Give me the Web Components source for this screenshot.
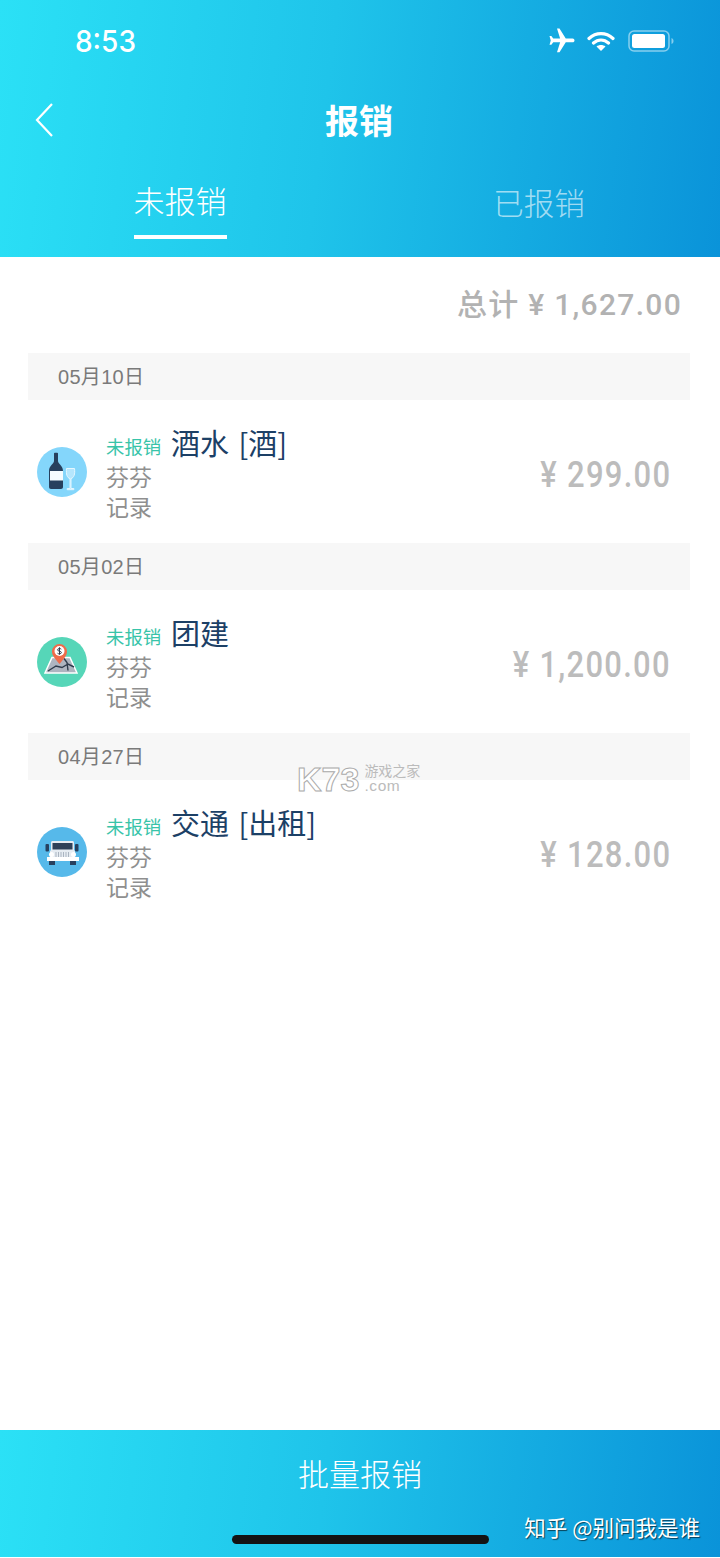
<!DOCTYPE html>
<html lang="zh">
<head>
<meta charset="utf-8">
<title>报销</title>
<style>
  html, body { margin: 0; padding: 0; background: #fff; }
  body { width: 720px; height: 1558px; overflow: hidden; font-family: "Noto Sans CJK SC", sans-serif; }
  .page { position: relative; display: flex; flex-direction: column; height: 1558px; }
  .list { flex: 1; }
</style>
</head>
<body>
<div class="page">
  <app-header title="报销"></app-header>
  <div class="list">
    <total-row>总计 ¥ 1,627.00</total-row>
    <date-band>05月10日</date-band>
    <expense-row name="酒水 [酒]" amount="¥ 299.00" who="芬芬记录">
      <svg slot="icon" viewBox="0 0 50 50" width="50" height="50">
        <circle cx="25" cy="25" r="25" fill="#84d6fb"/>
        <path d="M17 6.500c0-.5.3-.8.8-.8h2.400c.5 0 .8.300.8.800V14c0 3 5 4.500 5 10v16c0 1.200-.8 2-2 2h-10c-1.200 0-2-.8-2-2V24c0-5.500 5-7 5-10z" fill="#27405e"/>
        <rect x="13" y="24" width="13" height="9.500" fill="#f4fbff"/>
        <path d="M29.500 21.500h8c.8 5.500-.6 9.500-3.500 10v10h2.800v1.200h-6.600v-1.200H33v-10c-3-.5-4-4.500-3.500-10z" fill="#b5e6fd" stroke="#e6f7ff" stroke-width="1"/>
      </svg>
    </expense-row>
    <date-band>05月02日</date-band>
    <expense-row name="团建" amount="¥ 1,200.00" who="芬芬记录">
      <svg slot="icon" viewBox="0 0 50 50" width="50" height="50">
        <circle cx="25" cy="25" r="25" fill="#56d6b8"/>
        <path d="M15 20.500h18l7 15.500H8z" fill="#aeb4c0" stroke="#fff" stroke-width="1.500"/>
        <path d="M11 34l8-5 6 1.500 6-3.500 6 3M27 21.500l3 4 1 8" fill="none" stroke="#2f3b4c" stroke-width="1.400"/>
        <path d="M22.500 27c-4-5-7.500-8-7.500-12.500a7.500 7.500 0 0 1 15 0c0 4.500-3.500 7.500-7.500 12.500z" fill="#ef6b4a"/>
        <circle cx="22.500" cy="14" r="5" fill="#fff"/>
        <path d="M24.300 12.200c-.8-1-3.700-1-3.700.7s3.800 1 3.800 2.600-3.100 1.700-3.900.7M22.500 10.300v7.400" fill="none" stroke="#2f3b4c" stroke-width="1"/>
      </svg>
    </expense-row>
    <date-band>04月27日</date-band>
    <expense-row name="交通 [出租]" amount="¥ 128.00" who="芬芬记录">
      <svg slot="icon" viewBox="0 0 50 50" width="50" height="50">
        <circle cx="25" cy="25" r="25" fill="#56b9ea"/>
        <rect x="8.500" y="17" width="3.500" height="7.500" rx="1" fill="#27405e"/>
        <rect x="38" y="17" width="3.500" height="7.500" rx="1" fill="#27405e"/>
        <path d="M14 15.500c0-1 .8-1.500 1.500-1.500h20c.7 0 1.500.5 1.500 1.500V23l1 1v7H13v-7l1-1z" fill="#e6ecf2"/>
        <rect x="15.500" y="16" width="20" height="6.500" fill="#2f4159"/>
        <circle cx="14.500" cy="27.500" r="2.500" fill="#fff"/>
        <circle cx="36.500" cy="27.500" r="2.500" fill="#fff"/>
        <path d="M19 25v5M21.500 25v5M24 25v5M26.500 25v5M29 25v5M31.500 25v5" stroke="#aab4c0" stroke-width="1"/>
        <rect x="10" y="30" width="32" height="4" fill="#fff"/>
        <rect x="12" y="34" width="6" height="4" fill="#27405e"/>
        <rect x="33" y="34" width="6" height="4" fill="#27405e"/>
      </svg>
    </expense-row>
  </div>
  <bottom-action>批量报销</bottom-action>
  <site-mark></site-mark>
  <home-bar></home-bar>
  <credit-mark>知乎 @别问我是谁</credit-mark>
</div>

<script>
// Shared gradient for the header and the bottom button
const BRAND_GRADIENT = 'linear-gradient(97deg, #2be1f6 0%, #1fc4ea 45%, #0a93d9 100%)';

class StatusBar extends HTMLElement {
  constructor() {
    super();
    this.attachShadow({ mode: 'open' });
    this.shadowRoot.innerHTML = `
      <style>
        :host { display: flex; align-items: center; justify-content: space-between; height: 82px; padding: 0 46px 0 75px; color: #fff; }
        .time { display: block; font: 500 28px/1 "Inter", "Liberation Sans", sans-serif; transform: scaleY(1.08); transform-origin: left center; }
        .icons { display: flex; align-items: center; gap: 10px; }
        .wifi { margin-right: 3px; }
        svg { display: block; }
      </style>
      <span class="time">8:53</span>
      <div class="icons">
        <svg width="30" height="30" viewBox="0 0 24 24"><path transform="rotate(90 12 12)" fill="#fff" d="M21 16v-2l-8-5V3.500c0-.83-.67-1.500-1.500-1.500S10 2.670 10 3.500V9l-8 5v2l8-2.500V19l-2 1.500V22l3.500-1 3.500 1v-1.500L13 19v-5.500l8 2.500z"/></svg>
        <svg class="wifi" width="28" height="22" viewBox="0 0 28 22"><path d="M2 8.500c7-6.500 17-6.500 24 0M6.500 13c4.500-4 10.500-4 15 0" fill="none" stroke="#fff" stroke-width="3.200" stroke-linecap="round"/><path d="M14 21l-4.500-4.500c2.500-2 6.500-2 9 0z" fill="#fff"/></svg>
        <svg width="46" height="22" viewBox="0 0 46 22"><rect x="1" y="1" width="40" height="20" rx="5" fill="none" stroke="#fff" stroke-opacity=".5" stroke-width="1.500"/><rect x="4" y="4" width="33" height="14" rx="2.500" fill="#fff"/><path d="M43.500 8v6c1.300-.5 2-1.500 2-3s-.7-2.500-2-3z" fill="#fff" fill-opacity=".5"/></svg>
      </div>`;
  }
}

class AppHeader extends HTMLElement {
  constructor() {
    super();
    this.attachShadow({ mode: 'open' });
  }
  connectedCallback() {
    const title = this.getAttribute('title') || '';
    this.shadowRoot.innerHTML = `
      <style>
        :host { display: block; height: 257px; background: ${BRAND_GRADIENT}; color: #fff; }
        .nav { position: relative; display: flex; align-items: center; justify-content: center; height: 78px; }
        .nav svg { position: absolute; left: 35px; top: 21px; }
        h1 { margin: 0 2px 2px 0; font: 700 34px/1 "Noto Sans CJK SC", sans-serif; }
        .tabs { display: grid; grid-template-columns: 1fr 1fr; height: 97px; }
        .tab { display: flex; justify-content: center; }
        .tab span { display: block; height: 79px; padding-top: 5px; font: 300 31px/70px "Noto Sans CJK SC", sans-serif; }
        .tab.on span { border-bottom: 4px solid #fff; height: 70px; width: 93px; text-align: center; }
        .tab:not(.on) span { margin-left: -2px; padding-top: 7px; height: 77px; color: rgba(255,255,255,.62); font-size: 30.500px; }
      </style>
      <status-bar></status-bar>
      <div class="nav">
        <svg width="18" height="34" viewBox="0 0 18 34"><path d="M17 1L2 17l15 16" fill="none" stroke="#fff" stroke-width="2.200"/></svg>
        <h1>${title}</h1>
      </div>
      <div class="tabs">
        <div class="tab on"><span>未报销</span></div>
        <div class="tab"><span>已报销</span></div>
      </div>`;
  }
}

class TotalRow extends HTMLElement {
  constructor() {
    super();
    this.attachShadow({ mode: 'open' });
    this.shadowRoot.innerHTML = `
      <style>
        :host { display: flex; justify-content: flex-end; align-items: center; height: 96px; padding-right: 38px; color: #b2b2b2; font: 500 30px/1 "Roboto", "Noto Sans CJK SC", sans-serif; letter-spacing: 1.300px; }
      </style>
      <slot></slot>`;
  }
}

class DateBand extends HTMLElement {
  constructor() {
    super();
    this.attachShadow({ mode: 'open' });
    this.shadowRoot.innerHTML = `
      <style>
        :host { display: flex; align-items: center; height: 47px; margin: 0 30px 0 28px; padding-left: 30px; background: #f7f7f7; color: #7a7a7a; font: 400 20px/1 "Liberation Sans", "Noto Sans CJK SC", sans-serif; letter-spacing: .3px; }
      </style>
      <slot></slot>`;
  }
}

class ExpenseRow extends HTMLElement {
  constructor() {
    super();
    this.attachShadow({ mode: 'open' });
  }
  connectedCallback() {
    const name = this.getAttribute('name');
    const amount = this.getAttribute('amount');
    const who = this.getAttribute('who');
    this.shadowRoot.innerHTML = `
      <style>
        :host { display: grid; grid-template-columns: 50px 55px 1fr auto; align-items: start; height: 143px; margin: 0 30px 0 28px; padding: 0 19px 0 9px; box-sizing: border-box; }
        .icon { align-self: center; height: 50px; margin-top: 1px; }
        .icon ::slotted(svg) { display: block; }
        .meta { margin-left: 19px; width: 55px; padding-top: 34px; }
        .tag { color: #38c4a9; font-size: 18.400px; line-height: 24px; white-space: nowrap; }
        .who { color: #8f8f8f; font-size: 23px; line-height: 30px; margin-top: 3px; }
        .name { margin-left: 29px; padding-top: 22px; color: #1c4066; font-size: 29px; line-height: 40px; font-weight: 400; word-spacing: 3px; white-space: nowrap; }
        .amount { align-self: center; margin-top: 6px; color: #bcbcbc; font: 500 36px/1 "Roboto", sans-serif; letter-spacing: 1.500px; transform: scaleX(.86); transform-origin: right center; }
      </style>
      <div class="icon"><slot name="icon"></slot></div>
      <div class="meta">
        <div class="tag">未报销</div>
        <div class="who">${who}</div>
      </div>
      <div class="name">${name}</div>
      <div class="amount">${amount}</div>`;
  }
}

class BottomAction extends HTMLElement {
  constructor() {
    super();
    this.attachShadow({ mode: 'open' });
    this.shadowRoot.innerHTML = `
      <style>
        :host { display: block; height: 127px; margin-bottom: 1px; padding-top: 21px; box-sizing: border-box; background: ${BRAND_GRADIENT}; color: #fff; text-align: center; font: 300 31px/44px "Noto Sans CJK SC", sans-serif; }
      </style>
      <slot></slot>`;
  }
}

// Overlays that sit on top of the page
class SiteMark extends HTMLElement {
  constructor() {
    super();
    this.attachShadow({ mode: 'open' });
    this.shadowRoot.innerHTML = `
      <style>
        :host { position: absolute; left: 297px; top: 762px; display: flex; gap: 5px; pointer-events: none; }
        .logo { font: 700 34px/34px "Liberation Sans", sans-serif; color: #fff; -webkit-text-stroke: 1px #aaa; }
        .side { display: flex; flex-direction: column; color: #bbb; }
        .cn { font: 400 14px/16px "Noto Sans CJK SC", sans-serif; }
        .com { font: 400 15.500px/15px "Liberation Sans", sans-serif; letter-spacing: .6px; }
      </style>
      <div class="logo">K73</div>
      <div class="side"><span class="cn">游戏之家</span><span class="com">.com</span></div>`;
  }
}

class HomeBar extends HTMLElement {
  constructor() {
    super();
    this.attachShadow({ mode: 'open' });
    this.shadowRoot.innerHTML = `
      <style>
        :host { position: absolute; left: 232px; top: 1535px; width: 257px; height: 9px; border-radius: 5px; background: #131313; }
      </style>`;
  }
}

class CreditMark extends HTMLElement {
  constructor() {
    super();
    this.attachShadow({ mode: 'open' });
    this.shadowRoot.innerHTML = `
      <style>
        :host { position: absolute; right: 20px; top: 1512px; color: #fff; font: 400 21.500px/30px "Noto Sans CJK SC", sans-serif; text-shadow: 1px 1px 1px rgba(0,0,0,.6); white-space: nowrap; }
      </style>
      <slot></slot>`;
  }
}

customElements.define('status-bar', StatusBar);
customElements.define('app-header', AppHeader);
customElements.define('total-row', TotalRow);
customElements.define('date-band', DateBand);
customElements.define('expense-row', ExpenseRow);
customElements.define('bottom-action', BottomAction);
customElements.define('site-mark', SiteMark);
customElements.define('home-bar', HomeBar);
customElements.define('credit-mark', CreditMark);
</script>
</body>
</html>
